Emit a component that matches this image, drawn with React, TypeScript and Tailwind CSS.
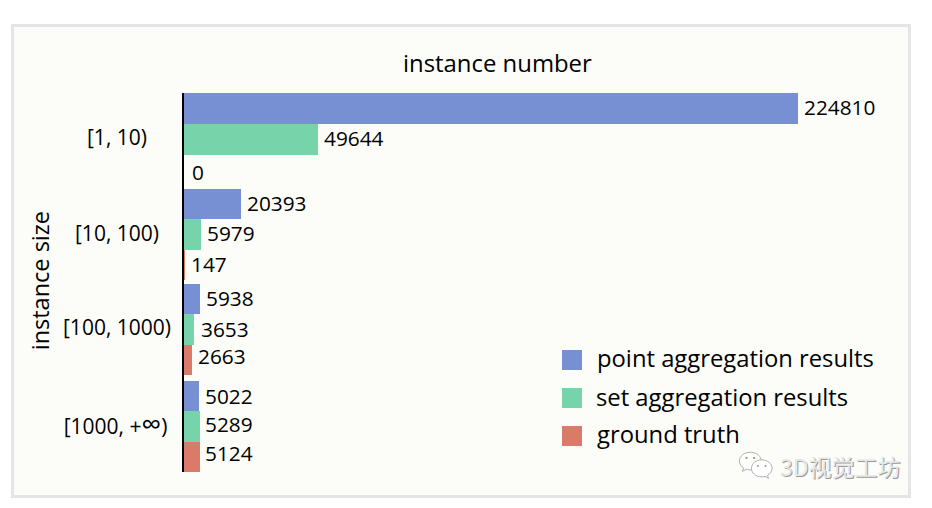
import type { ReactNode } from "react";

const font = "font-['Open_Sans',sans-serif]";

type Bar = { w: number; h: number; color: string; value: string; lift: string; gap: string };

const groups: { key: string; label: ReactNode; labelClass: string; gapClass: string; bars: Bar[] }[] = [
  {
    key: "a",
    label: "[1, 10)",
    labelClass: "pb-[5px]",
    gapClass: "mb-[1px]",
    bars: [
      { w: 614, h: 31, color: "bg-[#7790d3]", value: "224810", lift: "pb-[3px]", gap: "ml-[6px]" },
      { w: 134, h: 31, color: "bg-[#76d3aa]", value: "49644", lift: "pb-[3px]", gap: "ml-[6px]" },
      { w: 0, h: 33, color: "bg-[#da7b69]", value: "0", lift: "pt-[1px]", gap: "ml-[8px]" },
    ],
  },
  {
    key: "b",
    label: "[10, 100)",
    labelClass: "pb-[1px]",
    gapClass: "mb-[4px]",
    bars: [
      { w: 57, h: 30, color: "bg-[#7790d3]", value: "20393", lift: "pb-[3px]", gap: "ml-[6px]" },
      { w: 17, h: 31, color: "bg-[#76d3aa]", value: "5979", lift: "pb-[3px]", gap: "ml-[6px]" },
      { w: 1, h: 30, color: "bg-[#da7b69]", value: "147", lift: "pb-[2px]", gap: "ml-[6px]" },
    ],
  },
  {
    key: "c",
    label: "[100, 1000)",
    labelClass: "pb-[3px]",
    gapClass: "mb-[6px]",
    bars: [
      { w: 16, h: 30, color: "bg-[#7790d3]", value: "5938", lift: "pb-[3px]", gap: "ml-[6px]" },
      { w: 10, h: 31, color: "bg-[#76d3aa]", value: "3653", lift: "pb-[1px]", gap: "ml-[7px]" },
      { w: 8, h: 30, color: "bg-[#da7b69]", value: "2663", lift: "pb-[8px]", gap: "ml-[6px]" },
    ],
  },
  {
    key: "d",
    label: (
      <>
        [1000, +<span className="text-[28px] leading-none">∞</span>)
      </>
    ),
    labelClass: "pb-[1px] pr-[3px]",
    gapClass: "",
    bars: [
      { w: 15, h: 30, color: "bg-[#7790d3]", value: "5022", lift: "pb-[1px]", gap: "ml-[6px]" },
      { w: 16, h: 31, color: "bg-[#76d3aa]", value: "5289", lift: "pb-[5px]", gap: "ml-[5px]" },
      { w: 16, h: 30, color: "bg-[#da7b69]", value: "5124", lift: "pb-[8px]", gap: "ml-[5px]" },
    ],
  },
];

const legend = [
  { color: "bg-[#7790d3]", text: "point aggregation results", lift: "pb-[4px]", gap: "ml-[15px]" },
  { color: "bg-[#76d3aa]", text: "set aggregation results", lift: "pb-[2px]", gap: "ml-[14px]" },
  { color: "bg-[#da7b69]", text: "ground truth", lift: "pb-[4px]", gap: "ml-[15px]" },
];

function WeChat() {
  return (
    <svg width="36" height="32" viewBox="0 0 38 32" fill="none" stroke="#a9a9a9" strokeWidth="1">
      <path d="M13 1.5C6.5 1.5 1.5 5.6 1.5 10.8c0 3 1.7 5.5 4.3 7.2l-1 3.6 4-2.1c1.3.4 2.7.6 4.2.6h.8" fill="#fff" />
      <path d="M13 1.5c5.7 0 10.4 3.2 11.3 7.6" />
      <path d="M25 9.5c-6 0-10.8 4-10.8 9s4.8 9 10.8 9c1.2 0 2.4-.2 3.5-.5l3.6 2-.9-3.2c2.8-1.7 4.8-4.3 4.8-7.3 0-5-4.9-9-11-9z" fill="#fff" />
      <circle cx="9" cy="7.5" r="1.2" fill="#999" stroke="none" />
      <circle cx="17" cy="7.5" r="1.2" fill="#999" stroke="none" />
      <circle cx="21" cy="16" r="1.1" fill="#999" stroke="none" />
      <circle cx="29" cy="16" r="1.1" fill="#999" stroke="none" />
    </svg>
  );
}

export default function App() {
  return (
    <div className={`w-[932px] h-[508px] bg-white pl-[11px] pt-[24px] overflow-hidden ${font} text-black`}>
      <div className="relative w-[900px] h-[474px] border-[3px] border-[#e5e5e5] bg-[#fcfdf8] flex flex-col">
        <div className="h-[66px] pt-[23px] pl-[389px] text-[23.9px] leading-[26px] whitespace-nowrap">
          instance number
        </div>
        <div className="flex flex-1">
          <div className="w-[50px] flex items-center justify-center pb-[26px] pl-[1px]">
            <span className="[writing-mode:vertical-rl] rotate-180 text-[23.5px] leading-[26px] whitespace-nowrap">
              instance size
            </span>
          </div>
          <div className="w-[106px] flex flex-col">
            {groups.map((g) => (
              <div
                key={g.key}
                className={`flex items-center justify-center text-[21px] whitespace-nowrap ${g.labelClass} ${g.gapClass}`}
                style={{ height: g.bars.reduce((s, b) => s + b.h, 0) }}
              >
                <span>{g.label}</span>
              </div>
            ))}
          </div>
          <div className="ml-[12px] h-[379px] border-l-2 border-black flex flex-col">
            {groups.map((g) => (
              <div key={g.key} className={`flex flex-col ${g.gapClass}`}>
                {g.bars.map((b) => (
                  <div key={b.value} className="flex items-center" style={{ height: b.h }}>
                    <div className={`h-full ${b.color}`} style={{ width: b.w }} />
                    <span className={`${b.gap} ${b.lift} text-[20.8px] leading-[24px]`}>{b.value}</span>
                  </div>
                ))}
              </div>
            ))}
          </div>
        </div>

        <div className="absolute left-[548px] top-[322px] flex flex-col gap-[17px]">
          {legend.map((l) => (
            <div key={l.text} className="flex items-center h-[21px]">
              <div className={`w-[20px] h-[20px] ${l.color}`} />
              <span className={`${l.gap} ${l.lift} text-[23.8px] leading-[26px] whitespace-nowrap`}>{l.text}</span>
            </div>
          ))}
        </div>

        <div className="absolute left-[724px] top-[423px] flex items-center gap-[6px]">
          <WeChat />
          <span className="font-['Noto_Sans_CJK_SC',sans-serif] text-[23px] leading-[26px] text-[#e8e8e8] [text-shadow:1px_1px_0_#999] whitespace-nowrap">
            3D视觉工坊
          </span>
        </div>
      </div>
    </div>
  );
}
